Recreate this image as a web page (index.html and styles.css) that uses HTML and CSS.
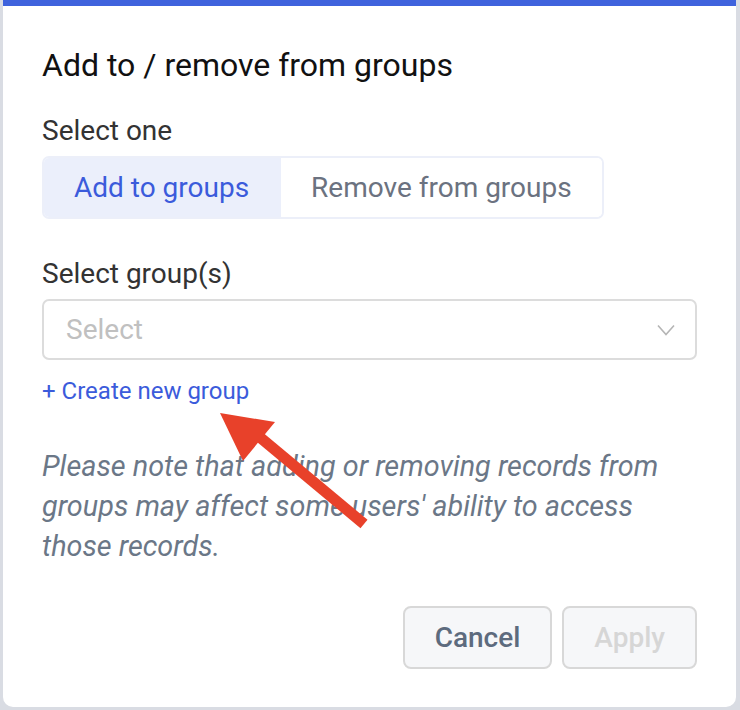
FILE: index.html
```html
<!DOCTYPE html>
<html lang="en">
<head>
    <meta charset="UTF-8">
    <meta name="viewport" content="width=device-width, initial-scale=1.0">
    <title>Add to / remove from groups</title>
    <link rel="stylesheet" href="styles.css">
</head>
<body>

    <div class="modal">
        <h1 class="modal-title">Add to / remove from groups</h1>

        <!-- Modus -->
        <div class="field">
            <div class="label">Select one</div>
            <div class="segmented">
                <button class="segment active">Add to groups</button>
                <button class="segment">Remove from groups</button>
            </div>
        </div>

        <!-- Gruppen -->
        <div class="field groups-field">
            <div class="label">Select group(s)</div>
            <div class="select">
                <span class="placeholder">Select</span>
                <svg class="chevron" width="18" height="12" viewBox="0 0 18 12">
                    <path d="M1 1.5 L9 10.5 L17 1.5" fill="none" stroke="#b5b5b5" stroke-width="1.6"/>
                </svg>
            </div>
            <a class="create-link" href="#">+ Create new group</a>
        </div>

        <p class="note">Please note that adding or removing records from groups may affect some users' ability to access those records.</p>

        <div class="actions">
            <button class="btn">Cancel</button>
            <button class="btn" disabled>Apply</button>
        </div>

        <!-- Annotation arrow -->
        <svg class="arrow" width="740" height="710" viewBox="0 0 740 710">
            <line x1="364" y1="524" x2="256" y2="434" stroke="#e8412a" stroke-width="11"/>
            <polygon points="220,413 275,422 243,461" fill="#e8412a"/>
        </svg>
    </div>

</body>
</html>
```

FILE: styles.css
```css
body {
    font-family: Roboto, "Liberation Sans", sans-serif;
    background-color: #d9dce3;
    color: #222;
    margin: 0;
    padding: 0;
}

.modal {
    box-sizing: border-box;
    width: 733px;
    height: 707px;
    margin-left: 3px;
    padding: 0 39px;
    background-color: white;
    border-top: 6px solid #3f63dd;
    border-radius: 0 0 10px 10px;
}

.modal-title {
    margin: 0;
    padding-top: 39px;
    font-size: 32px;
    font-weight: 400;
    line-height: 40px;
    color: #111;
}

.field {
    margin-top: 29px;
}

.label {
    font-size: 28px;
    line-height: 34px;
    color: #333;
    margin-bottom: 8px;
}

.segmented {
    display: inline-flex;
    border: 2px solid #eceff9;
    border-radius: 7px;
    overflow: hidden;
}

.segment {
    font-family: inherit;
    font-size: 28px;
    height: 59px;
    border: none;
    background-color: white;
    color: #6b7280;
    padding: 0 30px;
    cursor: pointer;
}

.segment.active {
    background-color: #ebeffb;
    color: #3b5bdb;
    padding: 0 32px 0 30px;
}

.groups-field {
    margin-top: 38px;
}

.select {
    display: flex;
    align-items: center;
    justify-content: space-between;
    height: 57px;
    padding: 0 20px 0 22px;
    border: 2px solid #dcdcdc;
    border-radius: 7px;
}

.placeholder {
    font-size: 28px;
    color: #c0c0c0;
}

.create-link {
    display: block;
    width: fit-content;
    margin-top: 16px;
    font-size: 24px;
    line-height: 30px;
    color: #3b5bdb;
    text-decoration: none;
}

.note {
    margin: 40px 0 0;
    font-size: 28.8px;
    line-height: 40px;
    font-style: italic;
    color: #6b7787;
}

.actions {
    display: flex;
    justify-content: flex-end;
    gap: 10px;
    margin-top: 40px;
}

.btn {
    font-family: inherit;
    font-size: 28px;
    font-weight: 500;
    height: 63px;
    padding: 0 30px;
    background-color: #f6f7f9;
    color: #5d6b7e;
    border: 2px solid #d8d8d8;
    border-radius: 8px;
    cursor: pointer;
}

.btn:disabled {
    color: #d6d6d6;
    cursor: default;
}

.arrow {
    position: absolute;
    left: 0;
    top: 0;
    pointer-events: none;
}
```
